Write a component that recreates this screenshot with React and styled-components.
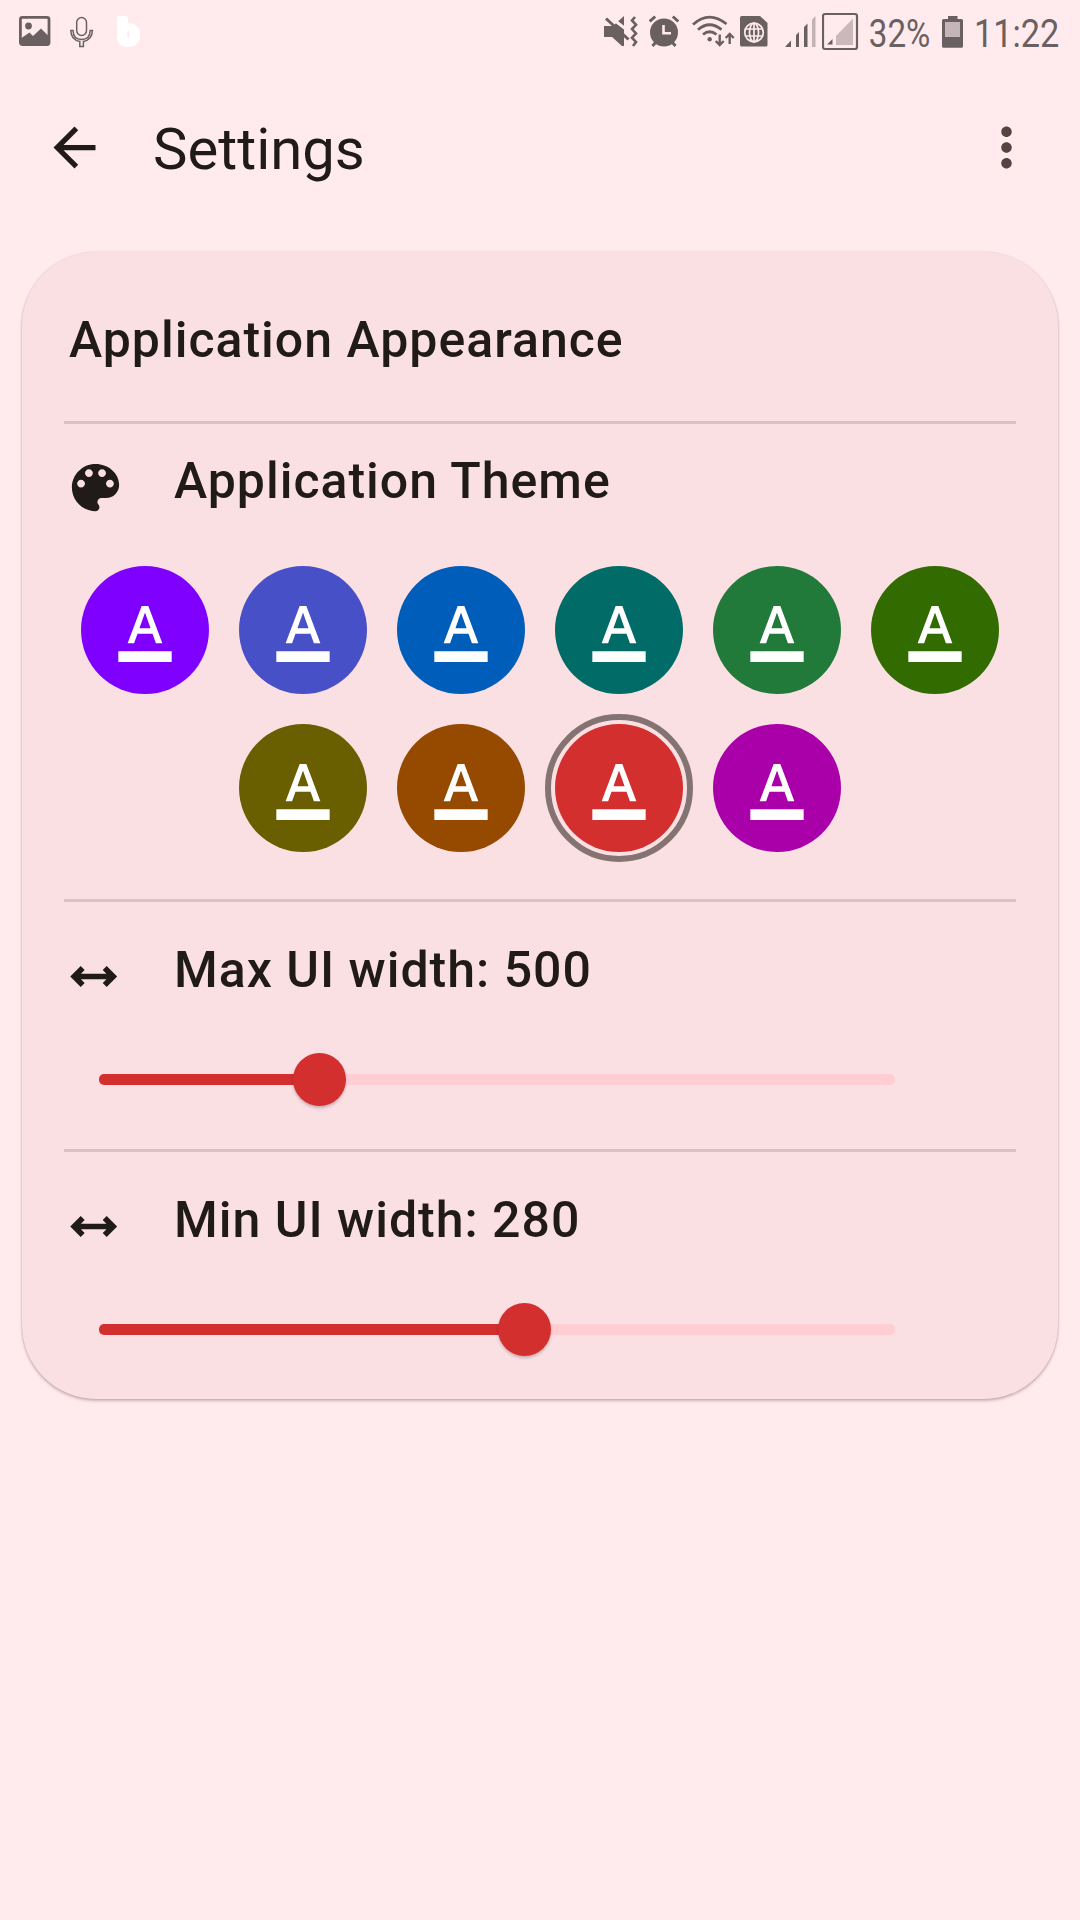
import React from "react";
import styled, { createGlobalStyle } from "styled-components";
import {
  MdArrowBack,
  MdMoreVert,
  MdFormatColorText,
} from "react-icons/md";

const GlobalStyle = createGlobalStyle`
  * { box-sizing: border-box; }
  body { margin: 0; background: #ffebee; }
`;

const Screen = styled.div`
  width: 1080px;
  height: 1920px;
  display: flex;
  flex-direction: column;
  background: #ffebee;
  color: #201a18;
  font-family: Roboto, "Liberation Sans", sans-serif;
`;

const StatusBar = styled.header`
  height: 64px;
  padding: 0 22px 0 19px;
  display: flex;
  justify-content: space-between;
  align-items: flex-start;
  color: #6b6061;
  svg { display: block; flex: none; }
`;

const StatusGroup = styled.div`
  display: flex;
  align-items: flex-start;
  height: 64px;
`;

const StatusIcon = styled.svg`
  width: ${(p) => p.$w}px;
  height: 64px;
  margin-right: ${(p) => p.$gap}px;
`;

const StatusText = styled.div`
  width: ${(p) => p.$w}px;
  margin-right: ${(p) => p.$gap}px;
  font-size: 39px;
  line-height: 46px;
  padding: 11px 0 0 1px;
  white-space: nowrap;
  transform-origin: 0 0;
  transform: scaleX(${(p) => p.$squeeze});
`;

const AppBar = styled.nav`
  height: 168px;
  padding: 0 42px 1px 43px;
  display: flex;
  align-items: center;
`;

const IconButton = styled.button`
  border: 0;
  padding: 0;
  background: none;
  width: 63px;
  height: 63px;
  color: ${(p) => p.$tone || "#201a18"};
  svg { display: block; width: 63px; height: 63px; }
`;

const Title = styled.h1`
  flex: 1;
  margin: 2px 0 0 47px;
  font-size: 58px;
  line-height: 68px;
  font-weight: 400;
`;

const Card = styled.main`
  margin: 20px 22px 0;
  height: 1147px;
  padding: 0 42px;
  border-radius: 74px;
  background: #fbe0e3;
  box-shadow: 0 2px 3px rgba(60, 20, 20, 0.26), 0 0 2px rgba(60, 20, 20, 0.14);
`;

const Section = styled.section`
  height: ${(p) => p.$h}px;
  border-bottom: ${(p) => (p.$last ? "0" : "3px solid #dac2c0")};
`;

const Heading = styled.h2`
  margin: 0;
  padding: 58px 0 0 5px;
  font-size: 50px;
  line-height: 60px;
  font-weight: 500;
  letter-spacing: 1px;
`;

const Row = styled.div`
  display: flex;
  align-items: flex-start;
  padding-top: ${(p) => p.$top}px;
`;

const RowIcon = styled.span`
  width: 63px;
  height: 63px;
  margin: 5px 47px 0 0;
  svg { display: block; width: 63px; height: 63px; }
`;

const RowLabel = styled.h3`
  margin: 0;
  font-size: 50px;
  line-height: 60px;
  font-weight: 500;
  letter-spacing: 1px;
`;

const Swatches = styled.div`
  display: flex;
  flex-wrap: wrap;
  justify-content: center;
  gap: 30px;
  padding: 47px 0 0;
`;

const Swatch = styled.button`
  width: 128px;
  height: 128px;
  padding: 0;
  border: 0;
  border-radius: 50%;
  display: flex;
  align-items: center;
  justify-content: center;
  background: ${(p) => p.$color};
  color: #fff;
  outline: ${(p) => (p.$selected ? "6px solid #857371" : "none")};
  outline-offset: 4px;
  svg { width: 64px; height: 64px; }
`;

const Slider = styled.div`
  display: flex;
  align-items: center;
  width: 796px;
  height: 53px;
  margin: 45px 0 0 35.4px;
`;

const Track = styled.div`
  height: 11px;
  background: ${(p) => (p.$active ? "#d32f2f" : "#ffcdd2")};
  border-radius: ${(p) => (p.$active ? "5px 0 0 5px" : "0 5px 5px 0")};
  flex: ${(p) => (p.$active ? "none" : "1")};
`;

const Thumb = styled.div`
  width: 53px;
  height: 53px;
  margin: 0 -26.5px;
  border-radius: 50%;
  background: #d32f2f;
  box-shadow: 0 2px 3px rgba(60, 20, 20, 0.25);
  z-index: 1;
`;

const COLORS = [
  "#7f00ff", "#4850c8", "#005dba", "#006b67", "#217a3a", "#326b00",
  "#6a5f00", "#964a00", "#d32f2f", "#a900a9",
];

function PaletteIcon() {
  return (
    <svg viewBox="0 0 24 24" fill="currentColor">
      <path d="M12 3c-4.970 0-9 4.030-9 9s4.030 9 9 9c.83 0 1.500-.67 1.500-1.500 0-.39-.15-.74-.39-1.010-.23-.26-.38-.61-.38-.99 0-.83.67-1.500 1.500-1.500H16c2.760 0 5-2.240 5-5 0-4.420-4.030-8-9-8zm-5.500 9c-.83 0-1.500-.67-1.500-1.500S5.670 9 6.500 9 8 9.670 8 10.500 7.330 12 6.500 12zm3-4C8.670 8 8 7.330 8 6.500S8.670 5 9.500 5s1.500.67 1.500 1.500S10.330 8 9.500 8zm5 0c-.83 0-1.500-.67-1.500-1.500S13.670 5 14.500 5s1.500.67 1.500 1.500S15.330 8 14.500 8zm3 4c-.83 0-1.500-.67-1.500-1.500S16.670 9 17.500 9s1.500.67 1.500 1.500-.67 1.500-1.500 1.500z" />
    </svg>
  );
}

function WidthArrow() {
  return (
    <svg viewBox="0 0 63 63" fill="none" stroke="currentColor" strokeWidth="5.6">
      <path d="M11 31.5h38M18.700 23l-8.500 8.500 8.500 8.500M40.700 23l8.500 8.500-8.500 8.500" />
    </svg>
  );
}

function WidthSetting({ label, filled }) {
  return (
    <>
      <Row $top={38}>
        <RowIcon><WidthArrow /></RowIcon>
        <RowLabel>{label}</RowLabel>
      </Row>
      <Slider>
        <Track $active style={{ width: filled }} />
        <Thumb />
        <Track />
      </Slider>
    </>
  );
}

function Notifications() {
  return (
    <StatusGroup>
      <StatusIcon $w={32} $gap={19} viewBox="0 0 32 64">
        <rect x="1.4" y="17.4" width="28.6" height="27.2" rx="2" fill="none" stroke="currentColor" strokeWidth="2.8" />
        <circle cx="9.5" cy="26" r="3.4" fill="currentColor" />
        <path d="M1 39 10.500 32.500 14 36 22 28.500 30 36.500V45H1Z" fill="currentColor" />
      </StatusIcon>
      <StatusIcon $w={24} $gap={23} viewBox="0 0 24 64" fill="none" stroke="currentColor" strokeWidth="1.5">
        <rect x="6.700" y="17.500" width="9.800" height="18" rx="4.900" />
        <path d="M.8 30.600H3c.2 6 3.700 9 8.600 9s8.400-3 8.600-9h2.200c-.2 6.200-3.600 10-9 10.800v5.200H9.800v-5.200C4.400 40.600 1 36.800.8 30.600Z" />
      </StatusIcon>
      <StatusIcon $w={24} $gap={0} viewBox="0 0 24 64" fill="#fff">
        <path fillRule="evenodd" d="M0 18.500Q0 16 2.500 16H8q3 0 3 3v4.300q12 0 12 11.700 0 12-12 12Q0 47 0 37ZM11.300 30.500q-1.200 1-1.200 4.200t1.200 4.300q.9-1 .9-4.300t-.9-4.200Z" />
      </StatusIcon>
    </StatusGroup>
  );
}

function SystemStatus() {
  return (
    <StatusGroup>
      <StatusIcon $w={36} $gap={9} viewBox="604 0 36 64" fill="currentColor">
        <path d="M604 26h9l11-10v30h-2l-10-9h-8Z" />
        <path d="M606 17l34 26" stroke="#ffebee" strokeWidth="3" transform="translate(1.500 -2)" />
        <path d="M606 18.500 628.500 39.500" stroke="currentColor" strokeWidth="3" />
        <path d="m635 17-3 3.500 4 4.300-4 4.300 4 4.300-4 4.300 4 4.300-3 4" fill="none" stroke="currentColor" strokeWidth="2.600" />
      </StatusIcon>
      <StatusIcon $w={31} $gap={12} viewBox="649 0 31 64" fill="currentColor">
        <circle cx="664" cy="32.500" r="14" />
        <path d="m649.700 21.500 5.500-5M678.300 21.500l-5.500-5M656 42l-3.500 4M672 42l3.500 4" stroke="currentColor" strokeWidth="3" />
        <path d="M663.500 25v8.300h7.500" fill="none" stroke="#ffebee" strokeWidth="2.600" />
      </StatusIcon>
      <StatusIcon $w={43} $gap={5} viewBox="692 0 43 64" fill="none" stroke="currentColor" strokeWidth="2.800">
        <path d="M693 24.500q16-14.500 33.500-.5M698 29.700q11.500-10 23.500 0M703 34.500q6.500-5.500 13.500 0" />
        <circle cx="709.700" cy="39.300" r="2.200" fill="currentColor" stroke="none" />
        <path d="M719.700 34.500v10.500M715.700 41l4 4 4-4M729.700 44V34M725.700 38l4-4 4 4" strokeWidth="2.400" />
      </StatusIcon>
      <StatusIcon $w={28} $gap={16} viewBox="740 0 28 64">
        <path d="M741.500 16H760l7.500 7v22q0 1.500-1.500 1.500h-24.500q-1.500 0-1.500-1.500V17.500q0-1.500 1.500-1.500Z" fill="currentColor" />
        <g fill="none" stroke="#ffebee" strokeWidth="1.700">
          <circle cx="754" cy="32.500" r="9.300" />
          <ellipse cx="754" cy="32.500" rx="4.500" ry="9.300" />
          <path d="M754 23v19M745.500 29h17M745.500 36h17" />
        </g>
      </StatusIcon>
      <StatusIcon $w={32} $gap={6} viewBox="784 0 32 64" fill="currentColor">
        <path d="M785 47 791 40.500V47ZM796 35l3-3v15h-3ZM804 27l3.500-3.500V47H804Z" />
        <path d="M812 19.500l3.500-3.500v31H812Z" opacity=".4" />
      </StatusIcon>
      <StatusIcon $w={37} $gap={9} viewBox="822 0 37 64">
        <rect x="823" y="14" width="34" height="35" rx="2" fill="none" stroke="currentColor" strokeWidth="2.200" />
        <path d="M827 44.500 832.500 39v5.500Z" fill="currentColor" />
        <path d="M836 36 853 18.500V45H836Z" fill="currentColor" opacity=".36" />
      </StatusIcon>
      <StatusText $w={61} $gap={13} $squeeze={0.85}>32%</StatusText>
      <StatusIcon $w={22} $gap={9} viewBox="942 0 22 64">
        <path d="M942 20.500q0-1.500 1.500-1.500h4.500v-3h9.500v3h4q1.500 0 1.500 1.500v25.700q0 1.500-1.500 1.500h-18q-1.500 0-1.500-1.500Z" fill="currentColor" />
        <path d="M945 22h15v15h-15Z" fill="#c4b6b8" />
      </StatusIcon>
      <StatusText $w={85} $gap={0} $squeeze={0.88}>11:22</StatusText>
    </StatusGroup>
  );
}

export default function App() {
  return (
    <Screen>
      <GlobalStyle />
      <StatusBar>
        <Notifications />
        <SystemStatus />
      </StatusBar>
      <AppBar>
        <IconButton aria-label="Back"><MdArrowBack /></IconButton>
        <Title>Settings</Title>
        <IconButton aria-label="More" $tone="#534341"><MdMoreVert /></IconButton>
      </AppBar>
      <Card>
        <Section $h={172}>
          <Heading>Application Appearance</Heading>
        </Section>
        <Section $h={478}>
          <Row $top={27}>
            <RowIcon><PaletteIcon /></RowIcon>
            <RowLabel>Application Theme</RowLabel>
          </Row>
          <Swatches>
            {COLORS.map((c) => (
              <Swatch key={c} $color={c} $selected={c === "#d32f2f"}>
                <MdFormatColorText />
              </Swatch>
            ))}
          </Swatches>
        </Section>
        <Section $h={250}>
          <WidthSetting label="Max UI width: 500" filled={220.3} />
        </Section>
        <Section $h={247} $last>
          <WidthSetting label="Min UI width: 280" filled={425.2} />
        </Section>
      </Card>
    </Screen>
  );
}
